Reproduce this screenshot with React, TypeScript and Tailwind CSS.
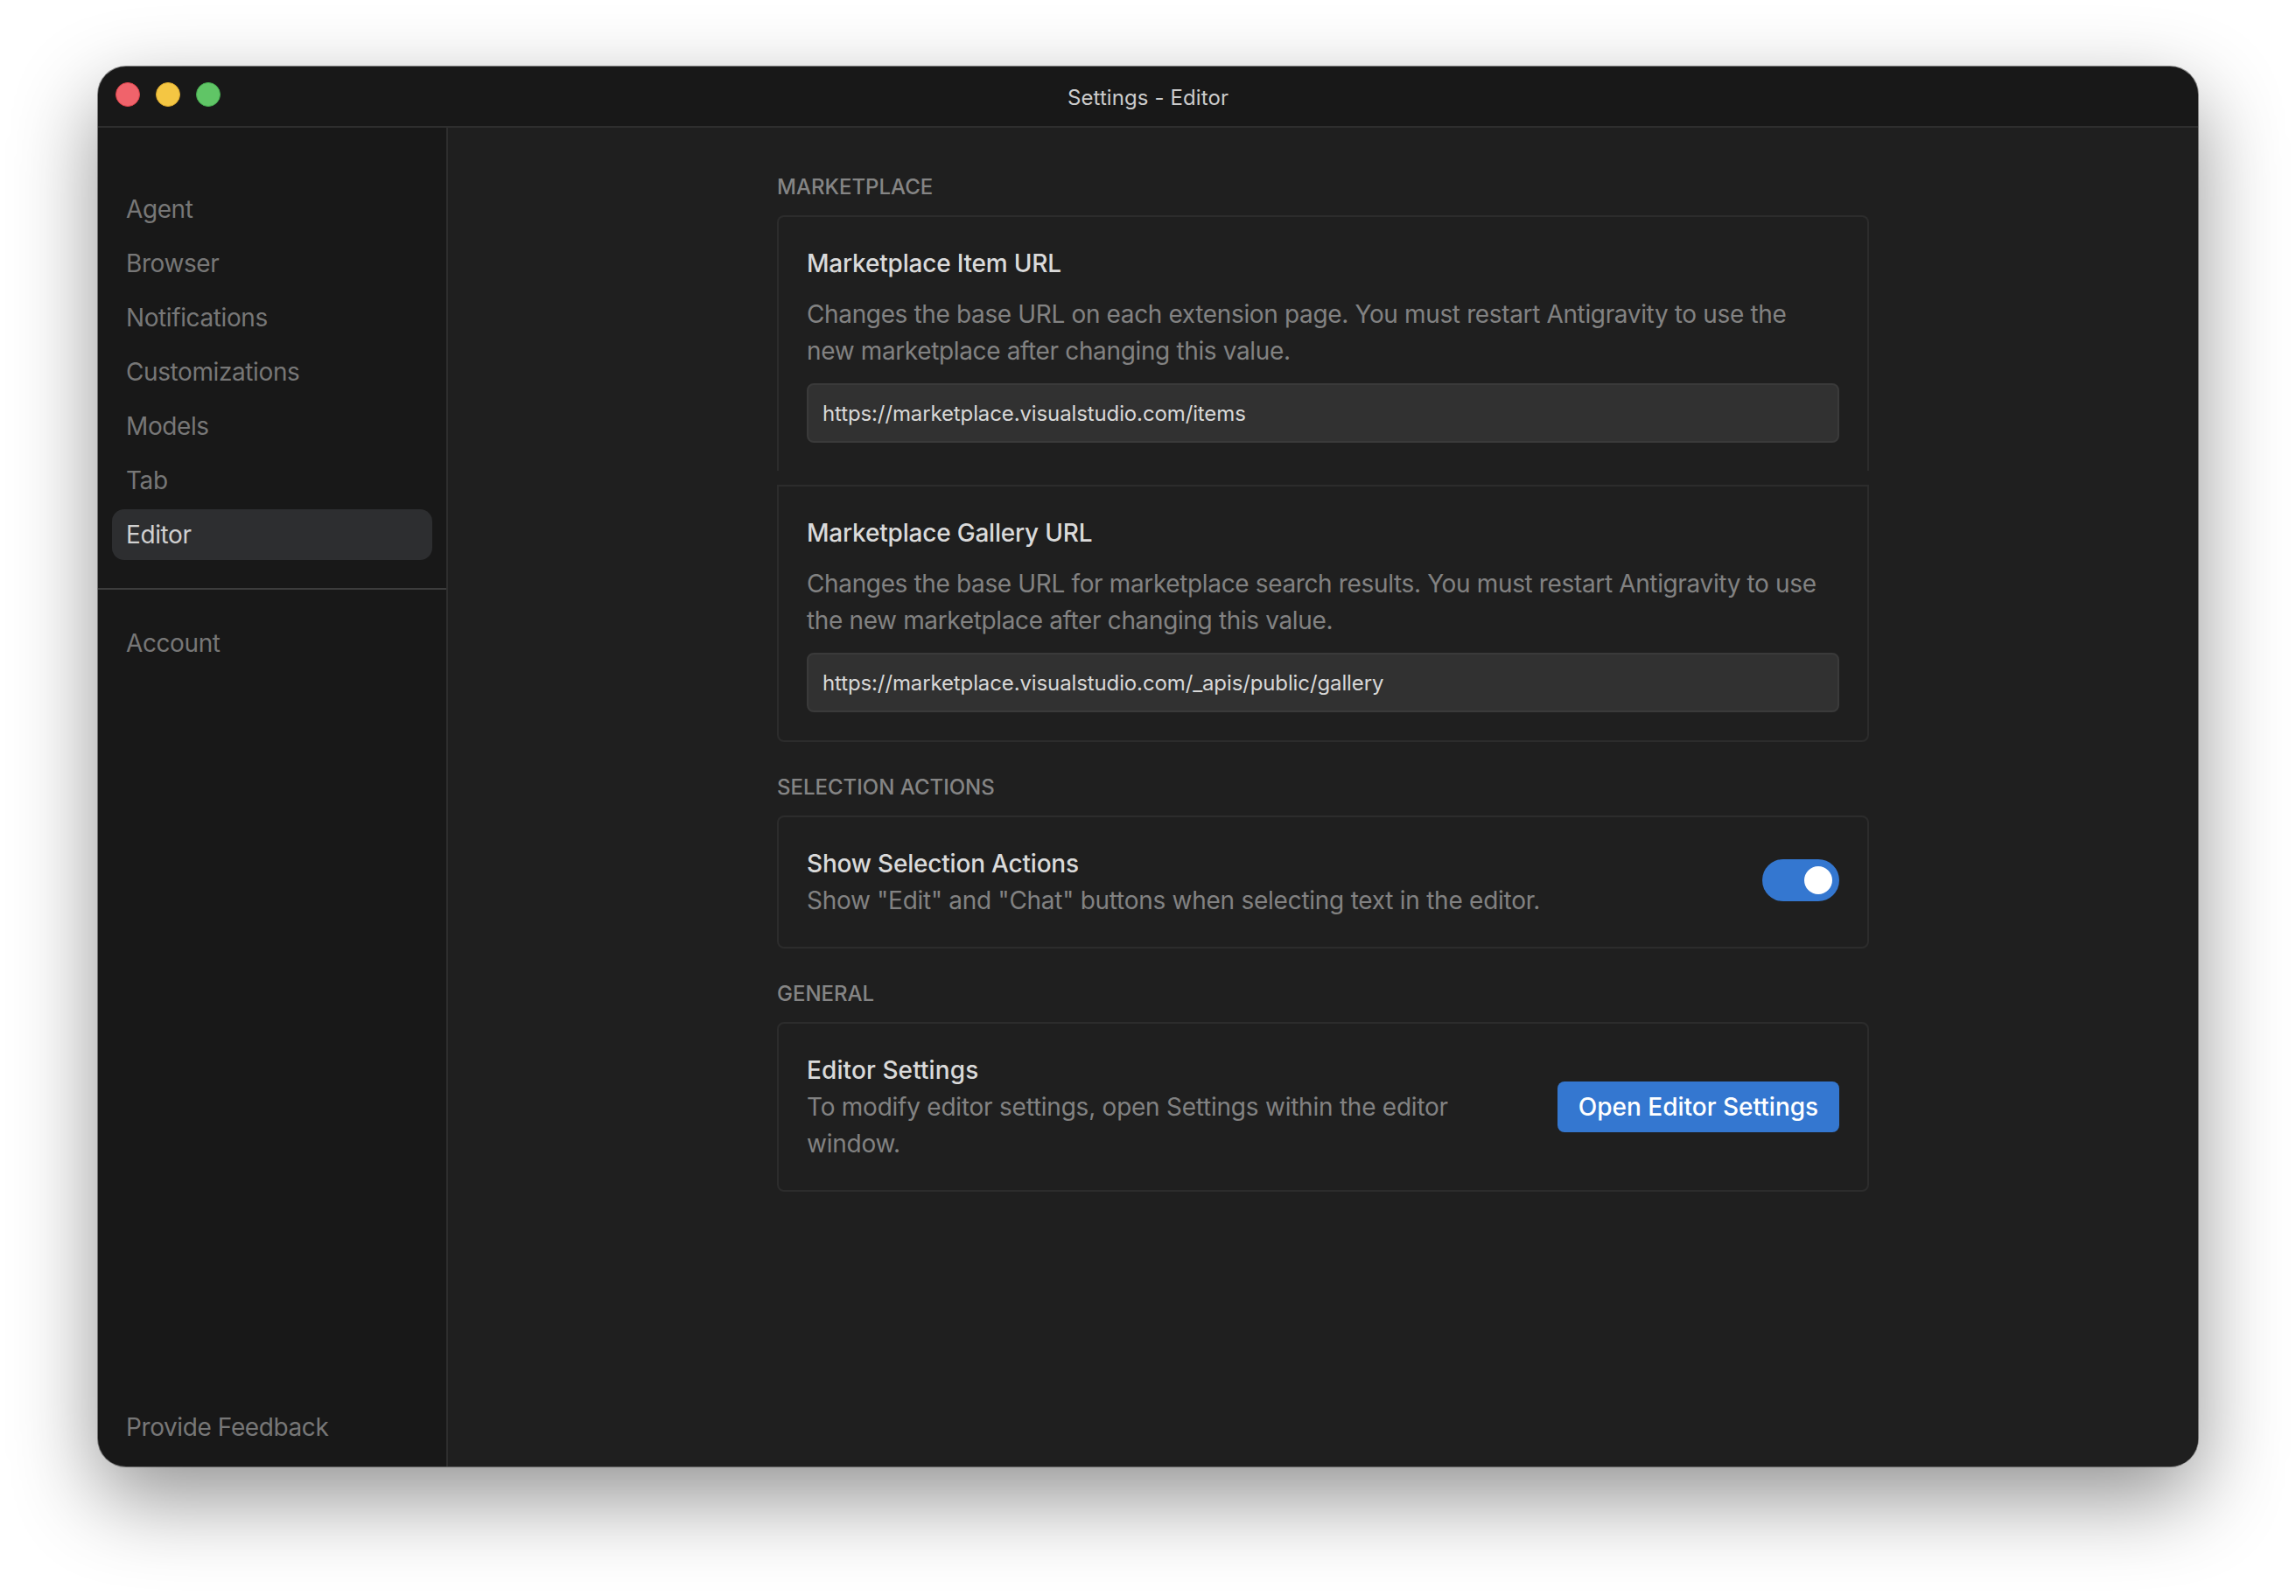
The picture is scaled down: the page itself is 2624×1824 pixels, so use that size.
import { useState } from 'react';

const navItems = ['Agent', 'Browser', 'Notifications', 'Customizations', 'Models', 'Tab', 'Editor'];

function NavItem({ label, active = false }: { label: string; active?: boolean }) {
  return (
    <div
      className={`flex h-[58px] items-center rounded-[14px] px-4 text-[28px] tracking-[-0.4px] ${
        active ? 'bg-[#2d2e30] text-[#d0d0d0]' : 'text-[#777777]'
      }`}
    >
      {label}
    </div>
  );
}

function SectionLabel({ children, className = '' }: { children: string; className?: string }) {
  return (
    <h3 className={`mb-4 h-8 pt-0.5 text-[24px] leading-8 font-medium text-[#858585] uppercase ${className}`}>
      {children}
    </h3>
  );
}

function SettingTitle({ children, className = 'tracking-[-0.2px]' }: { children: string; className?: string }) {
  return <h4 className={`text-[28px] leading-[42px] font-medium text-[#dadada] ${className}`}>{children}</h4>;
}

function UrlField({ title, lines, value }: { title: string; lines: string[]; value: string }) {
  return (
    <>
      <SettingTitle>{title}</SettingTitle>
      <p className="my-4 text-[28px] leading-[42px] tracking-[-0.36px] text-[#828282]">
        {lines.map((line) => (
          <span key={line} className="block whitespace-nowrap">
            {line}
          </span>
        ))}
      </p>
      <input
        readOnly
        value={value}
        className="h-[68px] w-full rounded-lg border-2 border-[#3a3a3a] bg-[#313131] px-4 text-[24px] tracking-[-0.12px] text-[#d8d8d8] outline-none"
      />
    </>
  );
}

export default function App() {
  const [enabled, setEnabled] = useState(true);

  return (
    <div className="h-[1824px] w-[2624px] overflow-hidden bg-white pt-[76px] pl-[112px] font-['Inter',sans-serif]">
      <div className="flex h-[1600px] w-[2400px] flex-col overflow-hidden rounded-[32px] bg-[#181818] shadow-[0_0_0_1px_rgba(0,0,0,0.4),0_36px_96px_rgba(0,0,0,0.43)]">
        {/* Title bar */}
        <div className="relative flex h-[70px] shrink-0 items-center justify-center border-b-2 border-[#2e2e2e] pt-1 text-[24px] tracking-[0.1px] text-[#cccccc]">
          <div className="absolute top-[18px] left-5 flex gap-[18px]">
            <span className="h-7 w-7 rounded-full border border-[#d9434a] bg-[#f0636b]" />
            <span className="h-7 w-7 rounded-full border border-[#d6a52c] bg-[#f4c643]" />
            <span className="h-7 w-7 rounded-full border border-[#45a94f] bg-[#60c566]" />
          </div>
          Settings - Editor
        </div>

        <div className="flex min-h-0 flex-1">
          {/* Sidebar */}
          <aside className="flex w-[400px] shrink-0 flex-col border-r-2 border-[#2e2e2e] pt-16">
            <nav className="flex flex-col gap-1 px-4">
              {navItems.map((item) => (
                <NavItem key={item} label={item} active={item === 'Editor'} />
              ))}
            </nav>
            <div className="mt-8 border-t-2 border-[#3c3c3c] px-4 pt-8">
              <NavItem label="Account" />
            </div>
            <div className="mt-auto px-4 pb-4">
              <NavItem label="Provide Feedback" />
            </div>
          </aside>

          {/* Settings */}
          <main className="flex-1 bg-[#1f1f1f] pt-[50px]">
            <div className="mx-auto w-[1248px]">
              <SectionLabel>Marketplace</SectionLabel>
              <div className="mt-[18px] rounded-t-lg border-2 border-b-0 border-[#2c2c2c] p-8">
                <UrlField
                  title="Marketplace Item URL"
                  lines={[
                    'Changes the base URL on each extension page. You must restart Antigravity to use the',
                    'new marketplace after changing this value.',
                  ]}
                  value="https://marketplace.visualstudio.com/items"
                />
              </div>
              <div className="mt-4 rounded-b-lg border-2 border-[#2c2c2c] p-8">
                <UrlField
                  title="Marketplace Gallery URL"
                  lines={[
                    'Changes the base URL for marketplace search results. You must restart Antigravity to use',
                    'the new marketplace after changing this value.',
                  ]}
                  value="https://marketplace.visualstudio.com/_apis/public/gallery"
                />
              </div>

              <SectionLabel className="mt-[34px]">Selection Actions</SectionLabel>
              <div className="mt-[18px] flex items-center justify-between rounded-lg border-2 border-[#2c2c2c] p-8">
                <div>
                  <SettingTitle>Show Selection Actions</SettingTitle>
                  <p className="text-[28px] leading-[42px] tracking-[-0.26px] text-[#828282]">
                    Show "Edit" and "Chat" buttons when selecting text in the editor.
                  </p>
                </div>
                <button
                  onClick={() => setEnabled(!enabled)}
                  className={`mb-1 flex h-12 w-[88px] items-center rounded-full px-2 ${
                    enabled ? 'justify-end bg-[#3477d0]' : 'justify-start bg-[#444444]'
                  }`}
                >
                  <span className="h-8 w-8 rounded-full bg-white" />
                </button>
              </div>

              <SectionLabel className="mt-[34px]">General</SectionLabel>
              <div className="mt-[18px] flex items-center justify-between rounded-lg border-2 border-[#2c2c2c] p-8">
                <div>
                  <SettingTitle className="tracking-[0.1px]">Editor Settings</SettingTitle>
                  <p className="text-[28px] leading-[42px] tracking-[-0.24px] text-[#828282]">
                    <span className="block">To modify editor settings, open Settings within the editor</span>
                    <span className="block">window.</span>
                  </p>
                </div>
                <button className="flex h-[58px] w-[322px] items-center justify-center rounded-lg bg-[#3477d0] text-[28px] font-medium text-white">
                  Open Editor Settings
                </button>
              </div>
            </div>
          </main>
        </div>
      </div>
    </div>
  );
}
